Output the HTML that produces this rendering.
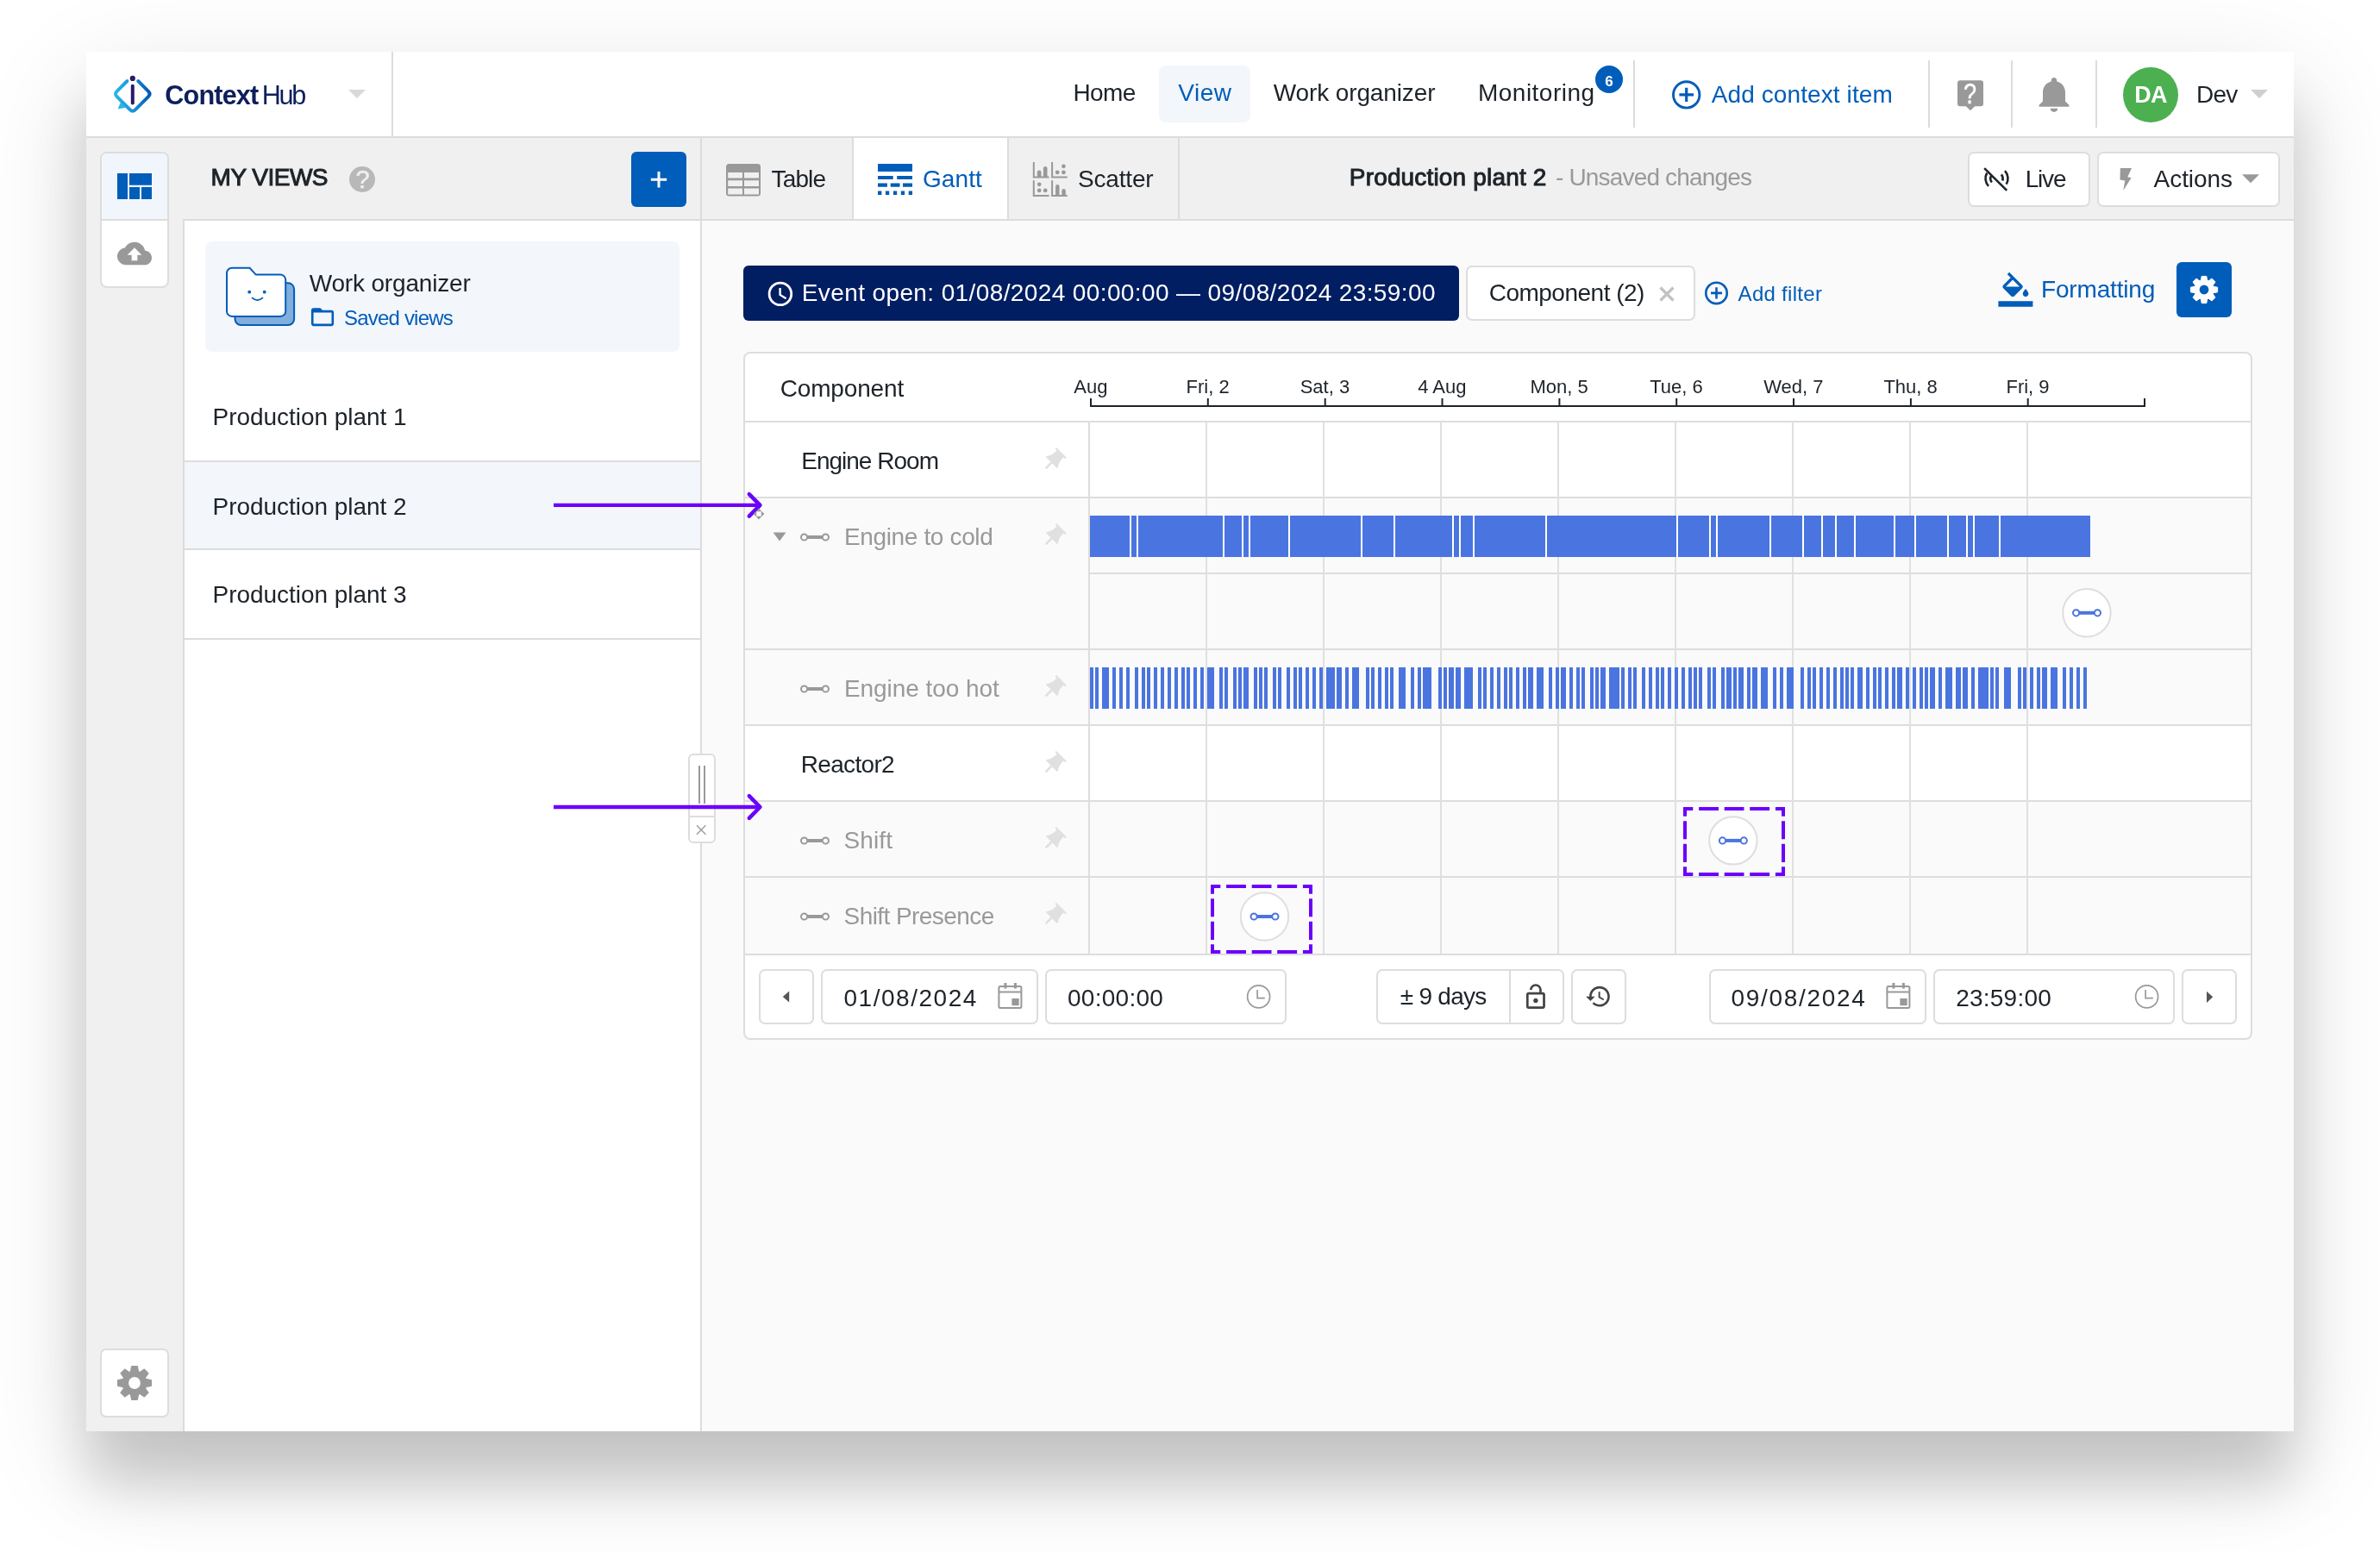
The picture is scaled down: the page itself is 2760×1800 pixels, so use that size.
<!DOCTYPE html>
<html lang="en"><head><meta charset="utf-8"><title>ContextHub - Gantt view</title>
<style>
html,body{margin:0;padding:0;}
body{width:2760px;height:1800px;position:relative;background:#fff;font-family:"Liberation Sans", sans-serif;}
.a{position:absolute;box-sizing:border-box;}
.t{position:absolute;white-space:pre;line-height:1;font-family:"Liberation Sans", sans-serif;}
svg{position:absolute;left:0;top:0;overflow:visible;will-change:transform;}
.btn{position:absolute;box-sizing:border-box;background:#fff;border:2px solid #dddddd;border-radius:7px;}
</style></head><body>
<!-- window -->
<div class="a" id="win" style="left:100px;top:60px;width:2560px;height:1600px;background:#f0f0f0;box-shadow:0 40px 120px rgba(0,0,0,0.14), 0 62px 58px rgba(0,0,0,0.15);"></div>
<!-- top bar -->
<div class="a" style="left:100px;top:60px;width:2560px;height:100px;background:#fff;border-bottom:2px solid #dcdcdc;"></div>
<div class="a" style="left:454px;top:60px;width:2px;height:98px;background:#dcdcdc;"></div>
<div class="a" style="left:1344px;top:76px;width:106px;height:66px;background:#f3f6fb;border-radius:8px;"></div>
<div class="a" style="left:1894px;top:70px;width:2px;height:78px;background:#dcdcdc;"></div>
<div class="a" style="left:2236px;top:70px;width:2px;height:78px;background:#dcdcdc;"></div>
<div class="a" style="left:2332px;top:70px;width:2px;height:78px;background:#dcdcdc;"></div>
<div class="a" style="left:2430px;top:70px;width:2px;height:78px;background:#dcdcdc;"></div>
<div class="a" style="left:1850px;top:76px;width:32px;height:32px;border-radius:50%;background:#005db9;"></div>
<div class="a" style="left:2462px;top:78px;width:64px;height:64px;border-radius:50%;background:#4caf50;"></div>
<!-- toolbar row border -->
<div class="a" style="left:212px;top:254px;width:2448px;height:2px;background:#dcdcdc;"></div>
<!-- icon rail -->
<div class="a" style="left:116px;top:176px;width:80px;height:158px;background:#fff;border:2px solid #dddddd;border-radius:8px;overflow:hidden;">
  <div class="a" style="left:0;top:0;width:76px;height:78px;background:#f1f6fc;border-bottom:2px solid #dddddd;"></div>
</div>
<div class="a" style="left:116px;top:1564px;width:80px;height:80px;background:#fff;border:2px solid #dddddd;border-radius:7px;"></div>
<!-- sidebar panel -->
<div class="a" style="left:212px;top:256px;width:602px;height:1404px;background:#fff;border-left:2px solid #dcdcdc;border-right:2px solid #dcdcdc;"></div>
<div class="a" style="left:812px;top:160px;width:2px;height:96px;background:#dcdcdc;"></div>
<div class="a" style="left:732px;top:176px;width:64px;height:64px;background:#005db9;border-radius:6px;"></div>
<div class="a" style="left:405px;top:193px;width:30px;height:30px;border-radius:50%;background:#b8b8b8;"></div>
<div class="a" style="left:238px;top:280px;width:550px;height:128px;background:#f3f6fb;border-radius:8px;"></div>
<div class="a" style="left:214px;top:534px;width:598px;height:104px;background:#f3f6fb;border-top:2px solid #dcdcdc;border-bottom:2px solid #dcdcdc;"></div>
<div class="a" style="left:214px;top:740px;width:598px;height:2px;background:#dcdcdc;"></div>
<!-- tabs -->
<div class="a" style="left:988px;top:160px;width:182px;height:94px;background:#fff;border-left:2px solid #dcdcdc;border-right:2px solid #dcdcdc;"></div>
<div class="a" style="left:1366px;top:160px;width:2px;height:94px;background:#dcdcdc;"></div>
<div class="btn" style="left:2282px;top:176px;width:142px;height:64px;"></div>
<div class="btn" style="left:2432px;top:176px;width:212px;height:64px;"></div>
<!-- main content -->
<div class="a" style="left:814px;top:256px;width:1846px;height:1404px;background:#fafafa;"></div>
<!-- filter row -->
<div class="a" style="left:862px;top:308px;width:830px;height:64px;background:#011e62;border-radius:6px;"></div>
<div class="btn" style="left:1700px;top:308px;width:266px;height:64px;"></div>
<div class="a" style="left:2524px;top:304px;width:64px;height:64px;background:#005db9;border-radius:6px;"></div>
<!-- splitter handle -->
<div class="a" style="left:798px;top:874px;width:32px;height:104px;background:#fff;border:2px solid #dddddd;border-radius:6px;"></div>
<div class="a" style="left:800px;top:946px;width:28px;height:2px;background:#dddddd;"></div>

<div class="a" style="left:862px;top:408px;width:1750px;height:798px;background:#fff;border:2px solid #dddddd;border-radius:8px;"></div>
<div class="a" style="left:864px;top:578px;width:1746px;height:174px;background:#fafafa;"></div>
<div class="a" style="left:864px;top:754px;width:1746px;height:86px;background:#fafafa;"></div>
<div class="a" style="left:864px;top:930px;width:1746px;height:86px;background:#fafafa;"></div>
<div class="a" style="left:864px;top:1018px;width:1746px;height:88px;background:#fafafa;"></div>
<div class="a" style="left:864px;top:488px;width:1746px;height:2px;background:#dddddd;"></div>
<div class="a" style="left:864px;top:576px;width:1746px;height:2px;background:#dddddd;"></div>
<div class="a" style="left:864px;top:752px;width:1746px;height:2px;background:#dddddd;"></div>
<div class="a" style="left:864px;top:840px;width:1746px;height:2px;background:#dddddd;"></div>
<div class="a" style="left:864px;top:928px;width:1746px;height:2px;background:#dddddd;"></div>
<div class="a" style="left:864px;top:1016px;width:1746px;height:2px;background:#dddddd;"></div>
<div class="a" style="left:864px;top:1106px;width:1746px;height:2px;background:#dddddd;"></div>
<div class="a" style="left:1264px;top:664px;width:1346px;height:2px;background:#dddddd;"></div>
<div class="a" style="left:1262px;top:490px;width:2px;height:616px;background:#dddddd;"></div>
<div class="a" style="left:1398px;top:490px;width:2px;height:616px;background:#e0e0e0;"></div>
<div class="a" style="left:1534px;top:490px;width:2px;height:616px;background:#e0e0e0;"></div>
<div class="a" style="left:1670px;top:490px;width:2px;height:616px;background:#e0e0e0;"></div>
<div class="a" style="left:1806px;top:490px;width:2px;height:616px;background:#e0e0e0;"></div>
<div class="a" style="left:1942px;top:490px;width:2px;height:616px;background:#e0e0e0;"></div>
<div class="a" style="left:2078px;top:490px;width:2px;height:616px;background:#e0e0e0;"></div>
<div class="a" style="left:2214px;top:490px;width:2px;height:616px;background:#e0e0e0;"></div>
<div class="a" style="left:2350px;top:490px;width:2px;height:616px;background:#e0e0e0;"></div>
<div class="btn" style="left:880px;top:1124px;width:64px;height:64px;"></div>
<div class="btn" style="left:952px;top:1124px;width:252px;height:64px;"></div>
<div class="btn" style="left:1212px;top:1124px;width:280px;height:64px;"></div>
<div class="btn" style="left:1596px;top:1124px;width:218px;height:64px;"></div>
<div class="btn" style="left:1822px;top:1124px;width:64px;height:64px;"></div>
<div class="btn" style="left:1982px;top:1124px;width:252px;height:64px;"></div>
<div class="btn" style="left:2242px;top:1124px;width:280px;height:64px;"></div>
<div class="btn" style="left:2530px;top:1124px;width:64px;height:64px;"></div>
<div class="a" style="left:1750px;top:1126px;width:2px;height:60px;background:#dddddd;"></div>
<svg width="2760" height="1800" viewBox="0 0 2760 1800">
<g stroke="#1d2329" stroke-width="2" fill="none"><path d="M1265 462V471H2487V462"/>
<path d="M1400.8 462V471"/>
<path d="M1536.7 462V471"/>
<path d="M1672.5 462V471"/>
<path d="M1808.4 462V471"/>
<path d="M1944.2 462V471"/>
<path d="M2080.0 462V471"/>
<path d="M2215.9 462V471"/>
<path d="M2351.7 462V471"/>
</g>
<g font-family="Liberation Sans, sans-serif" font-size="22" fill="#1d2329" text-anchor="middle">
<text x="1264.8" y="456.1">Aug</text>
<text x="1400.6" y="456.1">Fri, 2</text>
<text x="1536.4" y="456.1">Sat, 3</text>
<text x="1672.3" y="456.1">4 Aug</text>
<text x="1808.1" y="456.1">Mon, 5</text>
<text x="1944.0" y="456.1">Tue, 6</text>
<text x="2079.8" y="456.1">Wed, 7</text>
<text x="2215.6" y="456.1">Thu, 8</text>
<text x="2351.5" y="456.1">Fri, 9</text>
</g>
<rect x="1264" y="598" width="1160" height="48" fill="#4a74e0"/>
<g fill="#ffffff">
<rect x="1310" y="598" width="2" height="48"/>
<rect x="1318" y="598" width="2" height="48"/>
<rect x="1418" y="598" width="2" height="48"/>
<rect x="1440" y="598" width="2" height="48"/>
<rect x="1448" y="598" width="2" height="48"/>
<rect x="1494" y="598" width="2" height="48"/>
<rect x="1578" y="598" width="2" height="48"/>
<rect x="1616" y="598" width="2" height="48"/>
<rect x="1684" y="598" width="2" height="48"/>
<rect x="1692" y="598" width="2" height="48"/>
<rect x="1708" y="598" width="2" height="48"/>
<rect x="1792" y="598" width="2" height="48"/>
<rect x="1944" y="598" width="2" height="48"/>
<rect x="1982" y="598" width="2" height="48"/>
<rect x="1990" y="598" width="2" height="48"/>
<rect x="2052" y="598" width="2" height="48"/>
<rect x="2090" y="598" width="2" height="48"/>
<rect x="2112" y="598" width="2" height="48"/>
<rect x="2128" y="598" width="2" height="48"/>
<rect x="2150" y="598" width="2" height="48"/>
<rect x="2196" y="598" width="2" height="48"/>
<rect x="2220" y="598" width="2" height="48"/>
<rect x="2258" y="598" width="2" height="48"/>
<rect x="2280" y="598" width="2" height="48"/>
<rect x="2288" y="598" width="2" height="48"/>
<rect x="2318" y="598" width="2" height="48"/>
</g>
<path d="M1264 774h4v48h-4zM1270 774h4v48h-4zM1278 774h8v48h-8zM1290 774h4v48h-4zM1298 774h4v48h-4zM1306 774h4v48h-4zM1316 774h4v48h-4zM1324 774h4v48h-4zM1330 774h4v48h-4zM1338 774h4v48h-4zM1346 774h4v48h-4zM1354 774h4v48h-4zM1362 774h4v48h-4zM1370 774h4v48h-4zM1376 774h4v48h-4zM1384 774h4v48h-4zM1392 774h4v48h-4zM1400 774h8v48h-8zM1414 774h4v48h-4zM1420 774h4v48h-4zM1430 774h4v48h-4zM1436 774h4v48h-4zM1442 774h6v48h-6zM1454 774h4v48h-4zM1460 774h4v48h-4zM1466 774h4v48h-4zM1476 774h4v48h-4zM1482 774h4v48h-4zM1492 774h4v48h-4zM1500 774h4v48h-4zM1506 774h4v48h-4zM1514 774h4v48h-4zM1522 774h4v48h-4zM1530 774h4v48h-4zM1538 774h10v48h-10zM1550 774h6v48h-6zM1560 774h4v48h-4zM1568 774h8v48h-8zM1584 774h4v48h-4zM1590 774h4v48h-4zM1598 774h4v48h-4zM1606 774h4v48h-4zM1612 774h4v48h-4zM1622 774h8v48h-8zM1636 774h4v48h-4zM1644 774h4v48h-4zM1650 774h10v48h-10zM1668 774h4v48h-4zM1674 774h4v48h-4zM1680 774h6v48h-6zM1688 774h6v48h-6zM1698 774h10v48h-10zM1714 774h4v48h-4zM1720 774h4v48h-4zM1728 774h4v48h-4zM1736 774h4v48h-4zM1744 774h4v48h-4zM1750 774h4v48h-4zM1758 774h4v48h-4zM1766 774h4v48h-4zM1772 774h6v48h-6zM1782 774h8v48h-8zM1796 774h4v48h-4zM1804 774h4v48h-4zM1810 774h6v48h-6zM1820 774h4v48h-4zM1828 774h4v48h-4zM1834 774h4v48h-4zM1844 774h4v48h-4zM1850 774h4v48h-4zM1856 774h6v48h-6zM1866 774h12v48h-12zM1880 774h4v48h-4zM1888 774h4v48h-4zM1894 774h4v48h-4zM1904 774h4v48h-4zM1912 774h4v48h-4zM1920 774h4v48h-4zM1926 774h4v48h-4zM1934 774h4v48h-4zM1942 774h4v48h-4zM1950 774h4v48h-4zM1958 774h4v48h-4zM1964 774h4v48h-4zM1970 774h4v48h-4zM1980 774h4v48h-4zM1986 774h4v48h-4zM1996 774h4v48h-4zM2002 774h6v48h-6zM2010 774h4v48h-4zM2016 774h6v48h-6zM2026 774h4v48h-4zM2032 774h6v48h-6zM2042 774h8v48h-8zM2056 774h4v48h-4zM2064 774h4v48h-4zM2072 774h8v48h-8zM2088 774h4v48h-4zM2096 774h4v48h-4zM2102 774h4v48h-4zM2110 774h4v48h-4zM2118 774h4v48h-4zM2126 774h4v48h-4zM2134 774h4v48h-4zM2140 774h4v48h-4zM2146 774h4v48h-4zM2154 774h6v48h-6zM2164 774h4v48h-4zM2172 774h4v48h-4zM2178 774h4v48h-4zM2186 774h4v48h-4zM2194 774h4v48h-4zM2200 774h6v48h-6zM2210 774h4v48h-4zM2218 774h4v48h-4zM2226 774h4v48h-4zM2232 774h4v48h-4zM2238 774h6v48h-6zM2248 774h4v48h-4zM2256 774h8v48h-8zM2268 774h6v48h-6zM2276 774h6v48h-6zM2286 774h4v48h-4zM2294 774h12v48h-12zM2308 774h4v48h-4zM2314 774h4v48h-4zM2324 774h8v48h-8zM2340 774h4v48h-4zM2346 774h4v48h-4zM2354 774h4v48h-4zM2362 774h4v48h-4zM2368 774h6v48h-6zM2378 774h8v48h-8zM2392 774h4v48h-4zM2400 774h4v48h-4zM2408 774h4v48h-4zM2416 774h4v48h-4z" fill="#4a74e0"/>
<circle cx="2420" cy="710.8" r="27.7" fill="#fff" stroke="#dedede" stroke-width="2"/><g fill="none" stroke="#4a74e0"><line x1="2411.2" y1="710.8" x2="2428.8" y2="710.8" stroke-width="4"/><circle cx="2407.6" cy="710.8" r="3.6" stroke-width="2"/><circle cx="2432.4" cy="710.8" r="3.6" stroke-width="2"/></g>
<circle cx="2009.9" cy="974.9" r="27.7" fill="#fff" stroke="#dedede" stroke-width="2"/><g fill="none" stroke="#4a74e0"><line x1="2001.1" y1="974.9" x2="2018.7000000000003" y2="974.9" stroke-width="4"/><circle cx="1997.5" cy="974.9" r="3.6" stroke-width="2"/><circle cx="2022.3000000000002" cy="974.9" r="3.6" stroke-width="2"/></g>
<circle cx="1466.5" cy="1063" r="27.7" fill="#fff" stroke="#dedede" stroke-width="2"/><g fill="none" stroke="#4a74e0"><line x1="1457.6999999999998" y1="1063" x2="1475.3000000000002" y2="1063" stroke-width="4"/><circle cx="1454.1" cy="1063" r="3.6" stroke-width="2"/><circle cx="1478.9" cy="1063" r="3.6" stroke-width="2"/></g>
<g fill="none" stroke="#6b00fb" stroke-width="4"><path d="M1952 938H2070M1952 1014H2070" stroke-dasharray="11.3 6.8 22.9 6.7 22.8 6.7 22.9 6.8 11.3"/><path d="M1954 936V1016M2068 936V1016" stroke-dasharray="10.7 5.5 21.1 5.5 21.1 5.4 10.7"/></g>
<g fill="none" stroke="#6b00fb" stroke-width="4"><path d="M1404 1028H1522M1404 1104H1522" stroke-dasharray="11.3 6.8 22.9 6.7 22.8 6.7 22.9 6.8 11.3"/><path d="M1406 1026V1106M1520 1026V1106" stroke-dasharray="10.7 5.5 21.1 5.5 21.1 5.4 10.7"/></g>
<g fill="none" stroke="#6b00fb" stroke-width="5" stroke-linecap="round" stroke-linejoin="round"><path d="M642 585.9H881" stroke-linecap="butt" stroke-width="4.4"/><path d="M868.8 573.1L881.4 585.9L868.8 598.6999999999999" stroke-width="4.6"/></g>
<g fill="none" stroke="#6b00fb" stroke-width="5" stroke-linecap="round" stroke-linejoin="round"><path d="M642 936H881" stroke-linecap="butt" stroke-width="4.4"/><path d="M868.8 923.2L881.4 936L868.8 948.8" stroke-width="4.6"/></g>
<g fill="none" stroke="#999999"><line x1="936.2" y1="623" x2="953.8" y2="623" stroke-width="4"/><circle cx="932.6" cy="623" r="3.6" stroke-width="2"/><circle cx="957.4" cy="623" r="3.6" stroke-width="2"/></g>
<g fill="none" stroke="#999999"><line x1="936.2" y1="799" x2="953.8" y2="799" stroke-width="4"/><circle cx="932.6" cy="799" r="3.6" stroke-width="2"/><circle cx="957.4" cy="799" r="3.6" stroke-width="2"/></g>
<g fill="none" stroke="#999999"><line x1="936.2" y1="975" x2="953.8" y2="975" stroke-width="4"/><circle cx="932.6" cy="975" r="3.6" stroke-width="2"/><circle cx="957.4" cy="975" r="3.6" stroke-width="2"/></g>
<g fill="none" stroke="#999999"><line x1="936.2" y1="1063" x2="953.8" y2="1063" stroke-width="4"/><circle cx="932.6" cy="1063" r="3.6" stroke-width="2"/><circle cx="957.4" cy="1063" r="3.6" stroke-width="2"/></g>
<path d="M896.5 617.5h15l-7.5 10z" fill="#999999"/>
<defs><linearGradient id="lg" x1="0" y1="0" x2="1" y2="0"><stop offset="0" stop-color="#27b5e8"/><stop offset="0.55" stop-color="#1a8fd6"/><stop offset="1" stop-color="#0057b8"/></linearGradient></defs>
<path d="M160.20000000000002 94.0L172.00000000000003 105.8Q175.20000000000002 109.0 172.00000000000003 112.2L157.0 127.2Q153.8 130.4 150.60000000000002 127.2L135.6 112.2Q132.4 109.0 135.6 105.8L147.4 94.0" fill="none" stroke="url(#lg)" stroke-width="3.9" stroke-linecap="round" stroke-linejoin="round"/>
<path d="M140 118.5L136.6 126.6L146 124.8Z" fill="#27b5e8"/>
<circle cx="153.8" cy="90.9" r="3.1" fill="#2a1a66"/>
<path d="M153.8 99.8V119.6" stroke="#2a1a66" stroke-width="4" stroke-linecap="round"/>
<path d="M404 104h20l-10 10z" fill="#d9d9d9"/>
<path d="M2610 104h20l-10 10z" fill="#cfcfcf"/>
<path d="M2600 202.3h20l-10 10z" fill="#999999"/>
<g fill="none" stroke="#005db9"><circle cx="1955.7" cy="109.9" r="15.2" stroke-width="2.9"/><path d="M1947.4 109.9H1964M1955.7 101.7V118.1" stroke-width="3.2"/></g>
<g fill="none" stroke="#005db9" stroke-width="2.6"><circle cx="1990.5" cy="339.9" r="12.2"/><path d="M1984 339.9H1997M1990.5 333.3V346.6"/></g>
<path d="M2273 93.2h24a3 3 0 0 1 3 3v24a3 3 0 0 1 -3 3h-6.9l-5.1 5.1l-5.1 -5.1h-6.9a3 3 0 0 1 -3 -3v-24a3 3 0 0 1 3 -3z" fill="#999999"/>
<path transform="translate(2355.96 84.8) scale(2.17 2.05)" d="M12 22c1.1 0 2-.9 2-2h-4c0 1.1.89 2 2 2zm6-6v-5c0-3.07-1.64-5.64-4.5-6.32V4c0-.83-.67-1.5-1.5-1.5s-1.5.67-1.5 1.5v.68C7.63 5.36 6 7.92 6 11v5l-2 2v1h16v-1l-2-2z" fill="#999999" />
<path d="M136 201h12v30h-12zM150 201h26v13.7h-26zM150 217h12v14h-12zM164 217h12v14h-12z" fill="#005db9"/>
<path transform="translate(136 274) scale(1.667)" d="M19.35 10.04C18.67 6.59 15.64 4 12 4 9.11 4 6.6 5.64 5.35 8.04 2.34 8.36 0 10.91 0 14c0 3.31 2.69 6 6 6h13c2.76 0 5-2.24 5-5 0-2.64-2.05-4.78-4.65-4.96zM14 13v4h-4v-4H7l5-5 5 5h-3z" fill="#999999" />
<path d="M151.10 1593.00L152.50 1584.50L159.50 1584.50L160.90 1593.00ZM160.31 1592.76L167.31 1587.74L172.26 1592.69L167.24 1599.69ZM167.00 1599.10L175.50 1600.50L175.50 1607.50L167.00 1608.90ZM167.24 1608.31L172.26 1615.31L167.31 1620.26L160.31 1615.24ZM160.90 1615.00L159.50 1623.50L152.50 1623.50L151.10 1615.00ZM151.69 1615.24L144.69 1620.26L139.74 1615.31L144.76 1608.31ZM145.00 1608.90L136.50 1607.50L136.50 1600.50L145.00 1599.10ZM144.76 1599.69L139.74 1592.69L144.69 1587.74L151.69 1592.76Z" fill="#999999" stroke="#999999" stroke-width="1" stroke-linejoin="round"/><circle cx="156" cy="1604" r="14.50" fill="#999999"/><circle cx="156" cy="1604" r="6.9" fill="#ffffff"/>
<path d="M2552.06 327.14L2553.18 320.40L2558.82 320.40L2559.94 327.14ZM2559.47 326.95L2565.04 322.98L2569.02 326.96L2565.05 332.53ZM2564.86 332.06L2571.60 333.18L2571.60 338.82L2564.86 339.94ZM2565.05 339.47L2569.02 345.04L2565.04 349.02L2559.47 345.05ZM2559.94 344.86L2558.82 351.60L2553.18 351.60L2552.06 344.86ZM2552.53 345.05L2546.96 349.02L2542.98 345.04L2546.95 339.47ZM2547.14 339.94L2540.40 338.82L2540.40 333.18L2547.14 332.06ZM2546.95 332.53L2542.98 326.96L2546.96 322.98L2552.53 326.95Z" fill="#ffffff" stroke="#ffffff" stroke-width="1" stroke-linejoin="round"/><circle cx="2556" cy="336" r="11.67" fill="#ffffff"/><circle cx="2556" cy="336" r="5.4" fill="#005db9"/>
<path d="M754.8 208.2H773.2M764 199V217.4" stroke="#fff" stroke-width="3" fill="none"/>
<rect x="842" y="190" width="40" height="37.6" rx="3.5" fill="#999999"/>
<path d="M844.2 200h16.8v6.6h-16.8zM863 200h17v6.6h-17zM844.2 209.3h16.8v6.6h-16.8zM863 209.3h17v6.6h-17zM844.2 218.6h16.8v6.8h-16.8zM863 218.6h17v6.8h-17z" fill="#f0f0f0"/>
<path d="M1018 190h40v9h-40zM1018 203.9h17.7v4.1h-17.7zM1040.2 203.9h17.8v4.1h-17.8zM1018 212.5h10.9v4.2h-10.9zM1032.7 212.5h10.8v4.2h-10.8zM1047 212.5h11v4.2h-11zM1018 221.4h4.4v4.5h-4.4zM1026.9 221.4h4.3v4.5h-4.3zM1035.9 221.4h4.3v4.5h-4.3zM1044.8 221.4h4.3v4.5h-4.3zM1053.7 221.4h4.3v4.5h-4.3z" fill="#005db9"/>
<g fill="none" stroke="#999999" stroke-width="2"><path d="M1198.8 188V205.6H1216.6M1220.1 188V205.6H1237.8M1198.8 209.3V226.9H1216.6M1220.1 209.3V226.9H1237.8"/></g><g fill="#999999"><path d="M1202.8 205.6V199.8a2.35 2.35 0 0 1 4.7 0V205.6zM1209.9 205.6V195.3a2.3 2.3 0 0 1 4.6 0V205.6z"/><path d="M1224.1 226.9V216.3a2.2 2.2 0 0 1 4.4 0V226.9zM1231.3 226.9V221.3a2.25 2.25 0 0 1 4.5 0V226.9z"/><circle cx="1233.4" cy="192.8" r="2.35"/><circle cx="1226.2" cy="199.9" r="2.35"/><circle cx="1233.4" cy="199.9" r="2.35"/><circle cx="1205.2" cy="213.8" r="2.35"/><circle cx="1205.2" cy="220.9" r="2.35"/><circle cx="1212.2" cy="220.9" r="2.35"/></g>
<g fill="none" stroke="#1d2329" stroke-width="2.6"><path d="M2305.99 215.87A13 13 0 0 1 2304.24 200.50M2309.90 211.53A7.2 7.2 0 0 1 2309.03 203.84M2325.01 198.13A13 13 0 0 1 2326.64 213.70M2320.86 202.34A7.1 7.1 0 0 1 2322.17 209.43"/><path d="M2301.2 195.1L2327.2 220.9" stroke-width="2.6"/></g>
<path d="M2458.8 194.9H2472L2467.3 205.3L2471.6 206.2L2462.2 221L2464.3 209.6L2458.5 208.5Z" fill="#999999"/>
<rect x="272.5" y="328.3" width="68.6" height="48.7" rx="7" fill="#82aedb" stroke="#005db9" stroke-width="2"/>
<path d="M269 310.8H289.6L296.8 318.6H325.2a6 6 0 0 1 6 6V360.9a6 6 0 0 1 -6 6H269a6 6 0 0 1 -6 -6V316.8a6 6 0 0 1 6 -6z" fill="#fff" stroke="#005db9" stroke-width="2"/>
<circle cx="289.2" cy="338.7" r="1.9" fill="#005db9"/><circle cx="306.7" cy="338.7" r="1.9" fill="#005db9"/>
<path d="M292 345.2Q298.4 351 305 345.2" fill="none" stroke="#005db9" stroke-width="1.7"/>
<path transform="translate(358.3 352) scale(1.31)" d="M20 6h-8l-2-2H4c-1.1 0-1.99.9-1.99 2L2 18c0 1.1.9 2 2 2h16c1.1 0 2-.9 2-2V8c0-1.1-.9-2-2-2zm0 12H4V8h16v10z" fill="#005db9" />
<g fill="none" stroke="#fff"><circle cx="904.9" cy="340.9" r="12.8" stroke-width="2.8"/><path d="M904.6 334V341.9L911.6 346.3" stroke-width="2.4"/></g>
<path d="M1925.5 333.5L1940.5 348.5M1940.5 333.5L1925.5 348.5" stroke="#c2c2c2" stroke-width="3.2" fill="none"/>
<path transform="translate(2317.4 315.8) scale(1.667)" d="M16.56 8.94L7.62 0 6.21 1.41l2.38 2.38-5.15 5.15c-.59.59-.59 1.54 0 2.12l5.5 5.5c.29.29.68.44 1.06.44s.77-.15 1.06-.44l5.5-5.5c.59-.58.59-1.53 0-2.12zM5.21 10L10 5.21 14.79 10H5.21zM19 11.5s-2 2.17-2 3.5c0 1.1.9 2 2 2s2-.9 2-2c0-1.33-2-3.5-2-3.5zM0 20h24v4H0z" fill="#005db9" />
<path transform="translate(1220.0 535.9) rotate(45)" d="M-7.6 -15.6H7.6a1.1 1.1 0 0 1 0 2.2H5.6C5.4 -9 6 -4.5 9.2 -0.6a0.9 0.9 0 0 1 -0.7 1.5H1.3V9.4a1.3 1.3 0 0 1 -2.6 0V0.9H-8.5a0.9 0.9 0 0 1 -0.7 -1.5C-6 -4.5 -5.4 -9 -5.6 -13.4H-7.6a1.1 1.1 0 0 1 0 -2.2Z" fill="#e0e0e0"/>
<path transform="translate(1220.0 623.9) rotate(45)" d="M-7.6 -15.6H7.6a1.1 1.1 0 0 1 0 2.2H5.6C5.4 -9 6 -4.5 9.2 -0.6a0.9 0.9 0 0 1 -0.7 1.5H1.3V9.4a1.3 1.3 0 0 1 -2.6 0V0.9H-8.5a0.9 0.9 0 0 1 -0.7 -1.5C-6 -4.5 -5.4 -9 -5.6 -13.4H-7.6a1.1 1.1 0 0 1 0 -2.2Z" fill="#e0e0e0"/>
<path transform="translate(1220.0 799.9) rotate(45)" d="M-7.6 -15.6H7.6a1.1 1.1 0 0 1 0 2.2H5.6C5.4 -9 6 -4.5 9.2 -0.6a0.9 0.9 0 0 1 -0.7 1.5H1.3V9.4a1.3 1.3 0 0 1 -2.6 0V0.9H-8.5a0.9 0.9 0 0 1 -0.7 -1.5C-6 -4.5 -5.4 -9 -5.6 -13.4H-7.6a1.1 1.1 0 0 1 0 -2.2Z" fill="#e0e0e0"/>
<path transform="translate(1220.0 887.9) rotate(45)" d="M-7.6 -15.6H7.6a1.1 1.1 0 0 1 0 2.2H5.6C5.4 -9 6 -4.5 9.2 -0.6a0.9 0.9 0 0 1 -0.7 1.5H1.3V9.4a1.3 1.3 0 0 1 -2.6 0V0.9H-8.5a0.9 0.9 0 0 1 -0.7 -1.5C-6 -4.5 -5.4 -9 -5.6 -13.4H-7.6a1.1 1.1 0 0 1 0 -2.2Z" fill="#e0e0e0"/>
<path transform="translate(1220.0 975.9) rotate(45)" d="M-7.6 -15.6H7.6a1.1 1.1 0 0 1 0 2.2H5.6C5.4 -9 6 -4.5 9.2 -0.6a0.9 0.9 0 0 1 -0.7 1.5H1.3V9.4a1.3 1.3 0 0 1 -2.6 0V0.9H-8.5a0.9 0.9 0 0 1 -0.7 -1.5C-6 -4.5 -5.4 -9 -5.6 -13.4H-7.6a1.1 1.1 0 0 1 0 -2.2Z" fill="#e0e0e0"/>
<path transform="translate(1220.0 1063.9) rotate(45)" d="M-7.6 -15.6H7.6a1.1 1.1 0 0 1 0 2.2H5.6C5.4 -9 6 -4.5 9.2 -0.6a0.9 0.9 0 0 1 -0.7 1.5H1.3V9.4a1.3 1.3 0 0 1 -2.6 0V0.9H-8.5a0.9 0.9 0 0 1 -0.7 -1.5C-6 -4.5 -5.4 -9 -5.6 -13.4H-7.6a1.1 1.1 0 0 1 0 -2.2Z" fill="#e0e0e0"/>
<path d="M811 888V932M817 888V932" stroke="#999999" stroke-width="2" fill="none"/>
<path d="M808 957.3L818.4 967.7M818.4 957.3L808 967.7" stroke="#999999" stroke-width="1.3" fill="none"/>
<path d="M880 589.6l3.4 3.6h-6.8zM880 602.4l3.4 -3.6h-6.8zM873.6 596l3.6 -3.4v6.8zM886.4 596l-3.6 -3.4v6.8z" fill="#999999"/>
<path d="M907.8 1156L915.2 1149.4V1162.6Z" fill="#555"/>
<path d="M2566.2 1156.3L2559 1149.7V1162.9Z" fill="#555"/>
<g fill="none" stroke="#999999" stroke-width="2"><rect x="1158.4" y="1144" width="26" height="25" rx="1.5"/><path d="M1158.4 1150.5H1184.4"/><path d="M1165.9 1140V1146.5M1177.4 1140V1146.5" stroke-width="3"/></g><rect x="1173.4" y="1158" width="8.3" height="8.2" fill="#999999"/>
<g fill="none" stroke="#999999" stroke-width="2"><rect x="2188.4" y="1144" width="26" height="25" rx="1.5"/><path d="M2188.4 1150.5H2214.4"/><path d="M2195.9 1140V1146.5M2207.4 1140V1146.5" stroke-width="3"/></g><rect x="2203.4" y="1158" width="8.3" height="8.2" fill="#999999"/>
<g fill="none" stroke="#999999" stroke-width="1.7"><circle cx="1459.6" cy="1155.9" r="13"/><path d="M1458.1 1148.1000000000001V1157.7H1466.8"/></g>
<g fill="none" stroke="#999999" stroke-width="1.7"><circle cx="2489.6" cy="1155.9" r="13"/><path d="M2488.1 1148.1000000000001V1157.7H2496.7999999999997"/></g>
<path transform="translate(1764.4 1139.8) scale(1.375)" d="M12 17c1.1 0 2-.9 2-2s-.9-2-2-2-2 .9-2 2 .9 2 2 2zm6-9h-1V6c0-2.76-2.24-5-5-5S7 3.24 7 6h1.9c0-1.71 1.39-3.1 3.1-3.1 1.71 0 3.1 1.39 3.1 3.1v2H6c-1.1 0-2 .9-2 2v10c0 1.1.9 2 2 2h12c1.1 0 2-.9 2-2V10c0-1.1-.9-2-2-2zm0 12H6V10h12v10z" fill="#444" />
<path transform="translate(1837.8 1139.8) scale(1.32)" d="M13 3c-4.97 0-9 4.03-9 9H1l3.89 3.89.07.14L9 12H6c0-3.87 3.13-7 7-7s7 3.13 7 7-3.13 7-7 7c-1.93 0-3.68-.79-4.94-2.06l-1.42 1.42C8.27 19.99 10.51 21 13 21c4.97 0 9-4.03 9-9s-4.03-9-9-9zm-1 5v5l4.28 2.54.72-1.21-3.5-2.08V8H12z" fill="#444" />
</svg>
<div id="txt" style="position:absolute;left:0;top:0;width:2760px;height:1800px;will-change:transform;">
<span class="t" id="logo1" style="left:191.30px;top:95.00px;font-size:30.6px;color:#0d1f5c;font-weight:700;letter-spacing:-0.832px;">Context</span>
<span class="t" id="logo2" style="left:303.80px;top:95.00px;font-size:30.6px;color:#0d1f5c;letter-spacing:-2.312px;">Hub</span>
<span class="t" id="nav1" style="left:1244.50px;top:93.90px;font-size:28px;color:#1d2329;letter-spacing:-0.634px;">Home</span>
<span class="t" id="nav2" style="left:1366.20px;top:93.90px;font-size:28px;color:#005db9;letter-spacing:0.537px;">View</span>
<span class="t" id="nav3" style="left:1476.80px;top:93.90px;font-size:28px;color:#1d2329;letter-spacing:-0.125px;">Work organizer</span>
<span class="t" id="nav4" style="left:1714.00px;top:93.90px;font-size:28px;color:#1d2329;letter-spacing:0.474px;">Monitoring</span>
<span class="t" id="badge" style="left:1861.30px;top:85.51px;font-size:17px;color:#ffffff;font-weight:700;">6</span>
<span class="t" id="addctx" style="left:1984.70px;top:95.90px;font-size:28px;color:#005db9;letter-spacing:0.103px;">Add context item</span>
<span class="t" id="da" style="left:2475.30px;top:96.54px;font-size:27px;color:#ffffff;font-weight:700;letter-spacing:-0.900px;">DA</span>
<span class="t" id="dev" style="left:2547.00px;top:95.70px;font-size:28px;color:#1d2329;letter-spacing:-0.748px;">Dev</span>
<span class="t" id="myviews" style="left:244.60px;top:192.10px;font-size:28px;color:#1d2329;letter-spacing:-0.517px;-webkit-text-stroke:1px #1d2329;">MY VIEWS</span>
<span class="t" id="qm" style="left:412.40px;top:194.35px;font-size:29px;color:#f1f1f1;-webkit-text-stroke:0.4px #f1f1f1;">?</span>
<span class="t" id="tab1" style="left:894.60px;top:193.90px;font-size:28px;color:#1d2329;letter-spacing:-0.884px;">Table</span>
<span class="t" id="tab2" style="left:1070.00px;top:193.90px;font-size:28px;color:#005db9;letter-spacing:0.079px;">Gantt</span>
<span class="t" id="tab3" style="left:1250.00px;top:193.90px;font-size:28px;color:#1d2329;letter-spacing:-0.184px;">Scatter</span>
<span class="t" id="title" style="left:1564.80px;top:192.10px;font-size:28px;color:#1d2329;letter-spacing:0.169px;-webkit-text-stroke:1px #1d2329;">Production plant 2</span>
<span class="t" id="unsaved" style="left:1804.00px;top:192.10px;font-size:28px;color:#999999;letter-spacing:-0.829px;">- Unsaved changes</span>
<span class="t" id="live" style="left:2348.70px;top:193.80px;font-size:28px;color:#1d2329;letter-spacing:-1.192px;">Live</span>
<span class="t" id="actions" style="left:2497.60px;top:193.80px;font-size:28px;color:#1d2329;letter-spacing:-0.071px;">Actions</span>
<span class="t" id="wo" style="left:358.70px;top:314.90px;font-size:28px;color:#1d2329;letter-spacing:-0.171px;">Work organizer</span>
<span class="t" id="saved" style="left:399.00px;top:356.68px;font-size:24px;color:#005db9;letter-spacing:-0.803px;">Saved views</span>
<span class="t" id="pp1" style="left:246.60px;top:470.30px;font-size:28px;color:#1d2329;letter-spacing:-0.042px;">Production plant 1</span>
<span class="t" id="pp2" style="left:246.60px;top:573.80px;font-size:28px;color:#1d2329;letter-spacing:-0.042px;">Production plant 2</span>
<span class="t" id="pp3" style="left:246.60px;top:676.10px;font-size:28px;color:#1d2329;letter-spacing:-0.042px;">Production plant 3</span>
<span class="t" id="event" style="left:929.80px;top:326.30px;font-size:28px;color:#ffffff;letter-spacing:0.386px;">Event open: 01/08/2024 00:00:00 — 09/08/2024 23:59:00</span>
<span class="t" id="comp2" style="left:1726.70px;top:326.30px;font-size:28px;color:#1d2329;letter-spacing:-0.505px;">Component (2)</span>
<span class="t" id="addf" style="left:2015.60px;top:329.48px;font-size:24px;color:#005db9;letter-spacing:0.287px;">Add filter</span>
<span class="t" id="fmt" style="left:2367.00px;top:322.30px;font-size:28px;color:#005db9;letter-spacing:-0.170px;">Formatting</span>
<span class="t" id="comp" style="left:904.70px;top:437.00px;font-size:28px;color:#1d2329;letter-spacing:-0.158px;">Component</span>
<span class="t" id="r1" style="left:929.20px;top:520.80px;font-size:28px;color:#1d2329;letter-spacing:-0.986px;">Engine Room</span>
<span class="t" id="r2" style="left:978.90px;top:608.80px;font-size:28px;color:#999999;letter-spacing:-0.351px;">Engine to cold</span>
<span class="t" id="r3" style="left:978.90px;top:784.80px;font-size:28px;color:#999999;letter-spacing:-0.061px;">Engine too hot</span>
<span class="t" id="r4" style="left:928.70px;top:872.80px;font-size:28px;color:#1d2329;letter-spacing:-0.661px;">Reactor2</span>
<span class="t" id="r5" style="left:978.60px;top:960.80px;font-size:28px;color:#999999;letter-spacing:0.092px;">Shift</span>
<span class="t" id="r6" style="left:978.60px;top:1048.80px;font-size:28px;color:#999999;letter-spacing:-0.570px;">Shift Presence</span>
<span class="t" id="d1" style="left:978.50px;top:1143.90px;font-size:28px;color:#1d2329;letter-spacing:1.529px;">01/08/2024</span>
<span class="t" id="t1" style="left:1238.00px;top:1143.60px;font-size:28px;color:#1d2329;letter-spacing:0.271px;">00:00:00</span>
<span class="t" id="pm" style="left:1623.80px;top:1142.20px;font-size:28px;color:#1d2329;letter-spacing:-0.737px;">± 9 days</span>
<span class="t" id="d2" style="left:2007.60px;top:1143.60px;font-size:28px;color:#1d2329;letter-spacing:1.673px;">09/08/2024</span>
<span class="t" id="t2" style="left:2268.20px;top:1143.60px;font-size:28px;color:#1d2329;letter-spacing:0.229px;">23:59:00</span>
<span class="t" id="helpq" style="left:2277.40px;top:92.47px;font-size:33px;color:#ffffff;-webkit-text-stroke:0.5px #fff;transform:scaleX(0.82);transform-origin:0 50%;">?</span>
</div>
</body></html>
